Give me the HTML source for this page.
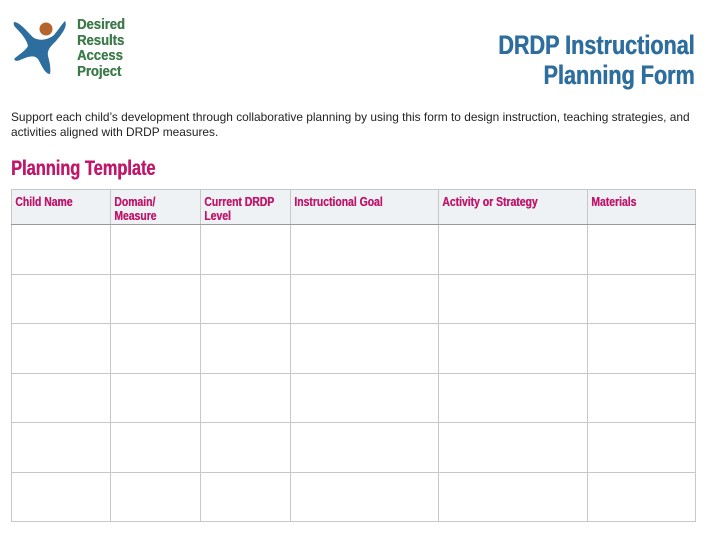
<!DOCTYPE html>
<html><head><style>
*{margin:0;padding:0;box-sizing:border-box}
body{width:708px;height:537px;background:#fff;position:relative;font-family:"Liberation Sans",sans-serif;overflow:hidden}
#logo{position:absolute;left:10px;top:16px}
#lt{position:absolute;left:77px;top:18px;color:#3c7a4a;font-size:14.5px;line-height:15.5px;transform:scaleX(0.9);transform-origin:left top;font-weight:bold;text-shadow:0.4px 0 0 #3c7a4a}
#title{position:absolute;right:13px;top:30px;text-align:right;color:#2e6e9e;font-size:27px;line-height:30px;font-weight:bold;transform:scaleX(0.8);transform-origin:right top;white-space:nowrap;text-shadow:0.6px 0 0 #2e6e9e}
#desc{position:absolute;left:11px;top:110px;width:690px;font-size:11.9px;line-height:15px;color:#222}
#pt{position:absolute;left:11px;top:157px;color:#c0176b;font-size:21px;font-weight:bold;transform:scaleX(0.78);transform-origin:left top;white-space:nowrap;text-shadow:0.5px 0 0 #c0176b}
table{position:absolute;left:11px;top:189px;border-collapse:collapse;width:685px;table-layout:fixed}
td,th{border:1px solid #c8c8c8}
th{background:#eef2f5;height:35px;vertical-align:top;text-align:left;padding:0;border-bottom:1px solid #999;overflow:hidden}
th div{color:#c0176b;font-size:13px;line-height:13.5px;font-weight:bold;padding:5px 4px 0;width:125%;transform:scaleX(0.8);transform-origin:left top;height:33px;text-shadow:0.4px 0 0 #c0176b}
td{height:49.5px}
</style></head><body>
<svg id="logo" width="62" height="62" viewBox="0 0 62 62">
<circle cx="36" cy="13" r="6.5" fill="#b4642c"/>
<path d="M5 6 C12 8 18 17 24 22 C30 25 38 24 44 19 C49 13 52 8 55 5 C58 10 52 18 46 25 C40 31 37 34 38 40 C40 47 41 54 40 58 C35 58 32 50 28 43 C24 38 17 41 10 44 C6 46 3 44 5 42 C10 38 16 34 18 30 C17 24 11 17 6 12 C3 9 3 6 5 6 Z" fill="#2e6e9e"/>
</svg>
<div id="lt">Desired<br>Results<br>Access<br>Project</div>
<div id="title">DRDP Instructional<br>Planning Form</div>
<div id="desc">Support each child’s development through collaborative planning by using this form to design instruction, teaching strategies, and activities aligned with DRDP measures.</div>
<div id="pt">Planning Template</div>
<table>
<colgroup><col style="width:99px"><col style="width:90px"><col style="width:90px"><col style="width:148px"><col style="width:149px"><col></colgroup>
<tr><th><div>Child Name</div></th><th><div>Domain/<br>Measure</div></th><th><div>Current DRDP<br>Level</div></th><th><div>Instructional Goal</div></th><th><div>Activity or Strategy</div></th><th><div>Materials</div></th></tr>
<tr><td></td><td></td><td></td><td></td><td></td><td></td></tr>
<tr><td></td><td></td><td></td><td></td><td></td><td></td></tr>
<tr><td></td><td></td><td></td><td></td><td></td><td></td></tr>
<tr><td></td><td></td><td></td><td></td><td></td><td></td></tr>
<tr><td></td><td></td><td></td><td></td><td></td><td></td></tr>
<tr><td></td><td></td><td></td><td></td><td></td><td></td></tr>
</table>
</body></html>
